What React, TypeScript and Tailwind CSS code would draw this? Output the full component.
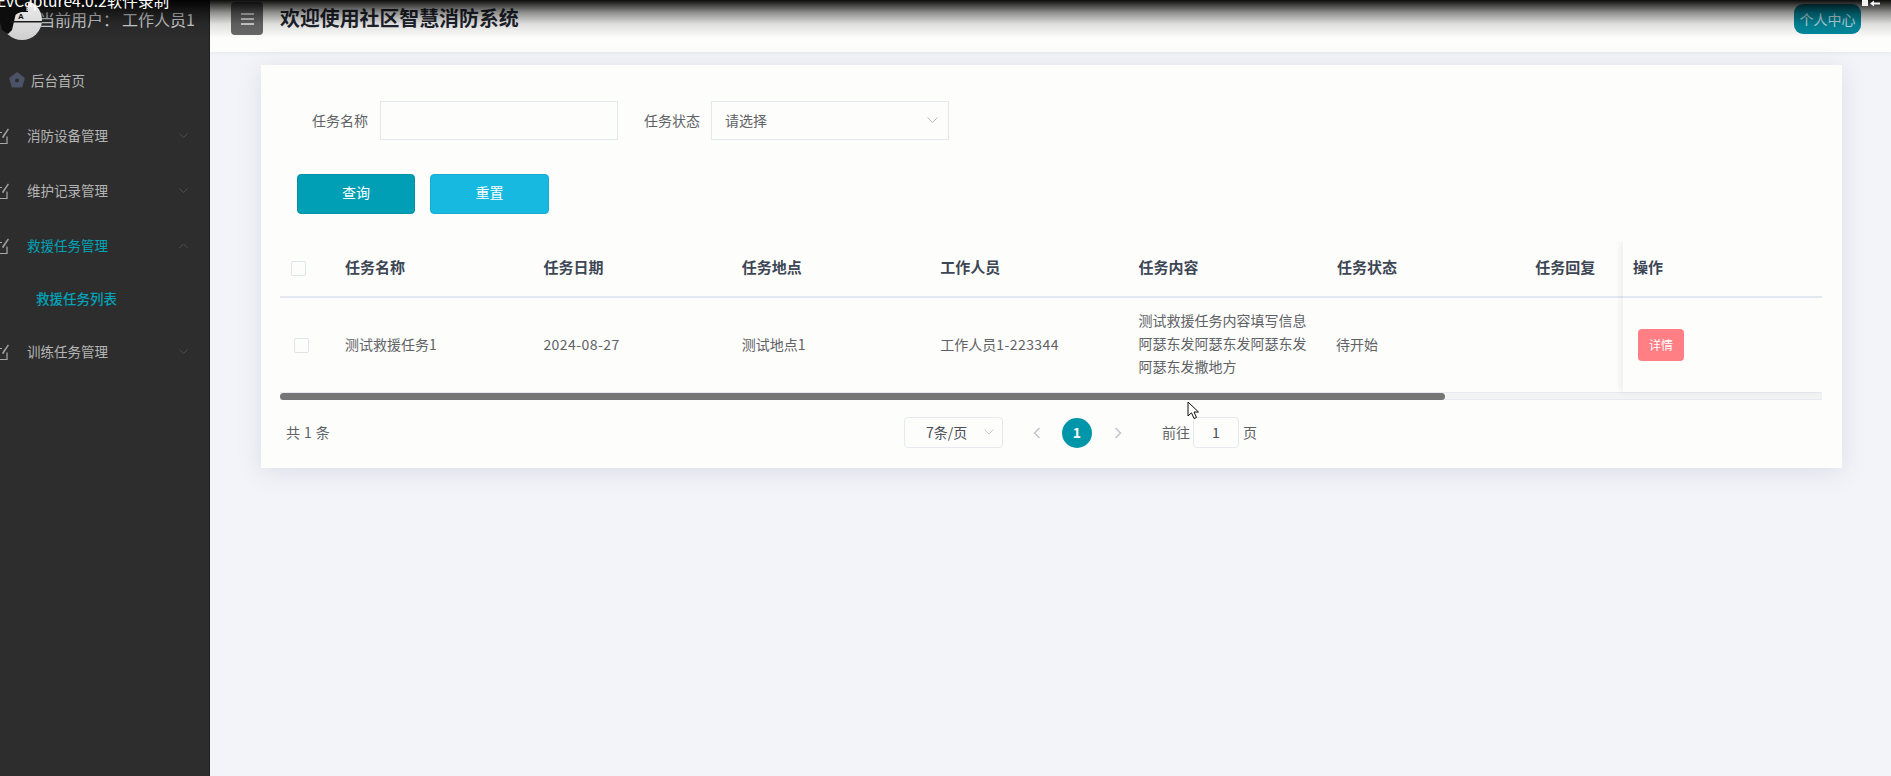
import React from "react";

const cols = ["任务名称", "任务日期", "任务地点", "工作人员", "任务内容", "任务状态", "任务回复"];

function EditIcon() {
  return (
    <svg width="16" height="16" viewBox="0 0 16 16" fill="none" stroke="#a8a8a8" strokeWidth="1.2" className="shrink-0 ml-[-7px]">
      <path d="M14 8.5V15.5H1V4.5H9" />
      <path d="M10 10L15.5 1.5L15 0.8L9.5 8.5Z" fill="#a8a8a8" strokeWidth="0.6" />
    </svg>
  );
}

function Chevron({ up, color = "#53585e", size = 9 }: { up?: boolean; color?: string; size?: number }) {
  return (
    <svg width={size} height={size * 0.6} viewBox="0 0 10 6" fill="none" stroke={color} strokeWidth="0.9">
      <path d={up ? "M0.5 5.5L5 1L9.5 5.5" : "M0.5 0.5L5 5L9.5 0.5"} />
    </svg>
  );
}

function MenuRow({ label, active, up, h }: { label: string; active?: boolean; up?: boolean; h: string }) {
  return (
    <div className={`flex items-center pr-[21px] pb-[2px] ${h}`}>
      <EditIcon />
      <span className={`ml-[18px] text-[13.5px] ${active ? "text-[#00a3b8]" : "text-[#b4b4b4]"}`}>{label}</span>
      <span className="ml-auto flex">
        <Chevron up={up} />
      </span>
    </div>
  );
}

function Checkbox() {
  return <span className="block w-[15px] h-[15px] border border-[#dfe3ea] rounded-[2px] bg-[#fdfdfb]" />;
}

export default function App() {
  return (
    <div className="relative flex w-full h-[776px] overflow-hidden bg-[#f3f4f9] font-['Noto_Sans_CJK_SC',sans-serif] text-[14px]">
      {/* sidebar */}
      <aside className="w-[210px] shrink-0 bg-[#2d2d2d] border-r border-[#222]">
        <div className="h-[53px] pl-[39px] pt-[6px] text-[16px] leading-[26px] text-[#d5d8dc] flex items-start">
          <span>当前用户：</span>
          <span className="ml-[3px]">工作人员1</span>
        </div>
        <div className="flex items-center h-[56px] pl-[9px] pb-[2px]">
          <svg width="16" height="16" viewBox="0 0 16 16">
            <path d="M8 0.8L15.2 6.2L12.8 14.8H3.2L0.8 6.2Z" fill="#4c5268" stroke="#4c5268" strokeWidth="1.2" strokeLinejoin="round" />
            <circle cx="8" cy="8.6" r="2" fill="#2d2d2d" />
          </svg>
          <span className="ml-[6px] text-[13.5px] text-[#b4b4b4]">后台首页</span>
        </div>
        <MenuRow label="消防设备管理" h="h-[55px]" />
        <MenuRow label="维护记录管理" h="h-[55px]" />
        <MenuRow label="救援任务管理" h="h-[55px]" active up />
        <div className="flex items-center h-[51px] pl-[36px] pb-[2px] text-[13.5px] font-medium text-[#00a3b8]">救援任务列表</div>
        <MenuRow label="训练任务管理" h="h-[55px]" />
      </aside>

      {/* main */}
      <main className="flex-1 min-w-0 flex flex-col">
        <header className="h-[52px] shrink-0 bg-[#fdfdfb] shadow-[0_1px_4px_rgba(0,0,0,0.06)] flex items-start pl-[21px] pr-[30px]">
          <button className="mt-[2px] w-[32px] h-[33px] rounded-[4px] bg-[#6a6a6a] flex flex-col items-center justify-center gap-[3px]">
            <span className="block w-[13px] h-[2px] bg-[#d8d8d8]" />
            <span className="block w-[13px] h-[2px] bg-[#d8d8d8]" />
            <span className="block w-[13px] h-[2px] bg-[#d8d8d8]" />
          </button>
          <h1 className="ml-[17px] mt-[3px] text-[19.9px] leading-[30px] font-bold text-[#1f2530]">欢迎使用社区智慧消防系统</h1>
          <button className="ml-auto mt-[4px] w-[67px] h-[30px] rounded-[9px] bg-[#008ba0] text-[14px] text-[#c4e6ea]">个人中心</button>
        </header>

        <div className="pt-[13px] pl-[51px] pr-[49px]">
          <section className="h-[403px] bg-[#fdfdfb] shadow-[0_4px_24px_rgba(60,70,110,0.12)] pt-[36px] pl-[19px] pr-[20px]">
            <div className="flex items-center h-[39px] pl-[32px]">
              <label className="text-[14px] text-[#606266] pb-[1px]">任务名称</label>
              <div className="ml-[12px] w-[238px] h-[39px] border border-[#e3e7ee] bg-[#fdfdfb]" />
              <label className="ml-[26px] text-[14px] text-[#606266] pb-[1px]">任务状态</label>
              <div className="ml-[11px] w-[238px] h-[39px] border border-[#e3e7ee] flex items-center pl-[13px] pr-[10px] pb-[1px] text-[#606266]">
                <span>请选择</span>
                <span className="ml-auto flex">
                  <Chevron color="#b5b9c0" size={11} />
                </span>
              </div>
            </div>
            <div className="flex gap-[15px] mt-[34px] pl-[17px]">
              <button className="w-[118px] h-[40px] pb-[3px] rounded-[4px] bg-[#019fb6] border border-[#0190a5] text-white text-[14px]">查询</button>
              <button className="w-[119px] h-[40px] pb-[3px] rounded-[4px] bg-[#18b9e0] border border-[#17acd0] text-white text-[14px]">重置</button>
            </div>

            {/* table */}
            <div className="relative mt-[27px] overflow-hidden">
              <div className="w-[1800px] grid grid-cols-[54px_repeat(7,198.4px)]">
                <div className="h-[57px] border-b-2 border-[#e2e7f0] flex items-center pl-[11px]">
                  <Checkbox />
                </div>
                {cols.map((c) => (
                  <div key={c} className="h-[57px] border-b-2 border-[#e2e7f0] flex items-center pl-[11px] pb-[2px] text-[15px] font-bold text-[#3c4654]">{c}</div>
                ))}
                <div className="h-[94px] flex items-center pl-[14px]">
                  <Checkbox />
                </div>
                <div className="h-[94px] flex items-center pl-[11px] pb-[2px] text-[#606266]">测试救援任务1</div>
                <div className="h-[94px] flex items-center pl-[11px] pb-[2px] text-[#606266] tracking-[0.45px]">2024-08-27</div>
                <div className="h-[94px] flex items-center pl-[11px] pb-[2px] text-[#606266]">测试地点1</div>
                <div className="h-[94px] flex items-center pl-[11px] pb-[2px] text-[#606266]">
                  <span>工作人员</span>
                  <span className="tracking-[0.45px]">1-223344</span>
                </div>
                <div className="h-[94px] flex items-center pl-[11px] pb-[3px] leading-[23px] text-[#606266]">
                  <span className="w-[170px]">测试救援任务内容填写信息阿瑟东发阿瑟东发阿瑟东发阿瑟东发撒地方</span>
                </div>
                <div className="h-[94px] flex items-center pl-[10px] pb-[2px] text-[#606266]">待开始</div>
                <div className="h-[94px]" />
              </div>
              {/* scrollbar */}
              <div className="h-[8px] bg-[#f2f3f5] border-y border-[#e6e9f0] relative">
                <div className="absolute left-0 top-0 h-[7px] w-[1165px] rounded-[4px] bg-[#757575]" />
              </div>
              {/* fixed column */}
              <div className="absolute right-0 top-0 w-[199px] h-[151px] bg-[#fdfdfb] shadow-[-3px_0_6px_rgba(0,0,0,0.06)]">
                <div className="h-[57px] border-b-2 border-[#e2e7f0] flex items-center pl-[10px] pb-[2px] text-[15px] font-bold text-[#3c4654]">操作</div>
                <div className="h-[94px] flex items-center pl-[15px]">
                  <button className="w-[46px] h-[32px] rounded-[4px] bg-[#ff7f85] text-white text-[12px] pb-[1px]">详情</button>
                </div>
              </div>
            </div>

            {/* pagination */}
            <div className="relative flex items-center h-[31px] mt-[17px] text-[#606266] text-[14px]">
              <span className="w-[620px] pl-[6px] pb-[1px] tracking-[0.4px]">共 1 条</span>
              <div className="ml-[4px] w-[99px] h-[31px] border border-[#e6e9f0] rounded-[4px] flex items-center pl-[21px] pr-[8px] pb-[1px] text-[#4a4f57]">
                <span>7条/页</span>
                <span className="ml-auto flex"><Chevron color="#c0c4cc" size={10} /></span>
              </div>
              <svg width="8" height="12" viewBox="0 0 8 12" fill="none" stroke="#c0c4cc" strokeWidth="1.5" className="ml-[30px]">
                <path d="M6.5 1L1.5 6L6.5 11" />
              </svg>
              <span className="ml-[21px] w-[30px] h-[30px] rounded-full bg-[#0096aa] text-white font-bold text-[14px] flex items-center justify-center">1</span>
              <svg width="8" height="12" viewBox="0 0 8 12" fill="none" stroke="#c0c4cc" strokeWidth="1.5" className="ml-[22px]">
                <path d="M1.5 1L6.5 6L1.5 11" />
              </svg>
              <span className="ml-[40px] pb-[1px]">前往</span>
              <span className="ml-[3px] w-[46px] h-[31px] border border-[#e6e9f0] rounded-[4px] flex items-center justify-center text-[#4a4f57]">1</span>
              <span className="ml-[4px] pb-[1px]">页</span>
            </div>
          </section>
        </div>
      </main>

      {/* capture overlay */}
      <div className="absolute inset-x-0 top-0 h-[38px] bg-[linear-gradient(to_bottom,rgba(0,0,0,0.95)_0,rgba(0,0,0,0.42)_13px,rgba(0,0,0,0.12)_24px,rgba(0,0,0,0)_38px)] pointer-events-none" />
      <svg width="44" height="42" viewBox="0 0 44 42" className="absolute left-0 top-0">
        <defs>
          <linearGradient id="av" x1="0" y1="0" x2="0" y2="1">
            <stop offset="0" stopColor="#ededed" />
            <stop offset="1" stopColor="#cfcfcf" />
          </linearGradient>
        </defs>
        <circle cx="22" cy="20" r="20" fill="url(#av)" />
        <path d="M0 0H40L34 3L28 2V12H22L16 13L12 30L8 34L2 30L0 22Z" fill="#0d0d0d" />
        <path d="M14 9L22 6V11L15 15Z" fill="#0d0d0d" />
        <path d="M10 21H42V22.5H10Z" fill="#1a1a1a" />
        <text x="18" y="19" fontSize="8" fontWeight="700" fill="#111" fontFamily="Liberation Sans">A</text>
        <text x="26" y="11" fontSize="7" fontWeight="700" fill="#ddd" fontFamily="Liberation Sans">B</text>
      </svg>
      <span className="absolute left-[-3px] top-[-10px] text-[15.6px] leading-[20px] text-white whitespace-nowrap">EvCapture4.0.2软件录制</span>
      <svg width="20" height="8" viewBox="0 0 20 8" className="absolute left-[1862px] top-0" fill="#f2f2f2">
        <rect x="0" y="0" width="6" height="6" />
        <path d="M18 2.5H12V0.5L8 3.5L12 6.5V4.5H18Z" />
      </svg>
      {/* cursor */}
      <svg width="13" height="19" viewBox="0 0 13 19" className="absolute left-[1187px] top-[401px]">
        <path d="M1 1V15L4.5 11.8L7 17.5L9.5 16.5L7 11H11.5Z" fill="#fff" stroke="#111" strokeWidth="1" />
      </svg>
    </div>
  );
}
